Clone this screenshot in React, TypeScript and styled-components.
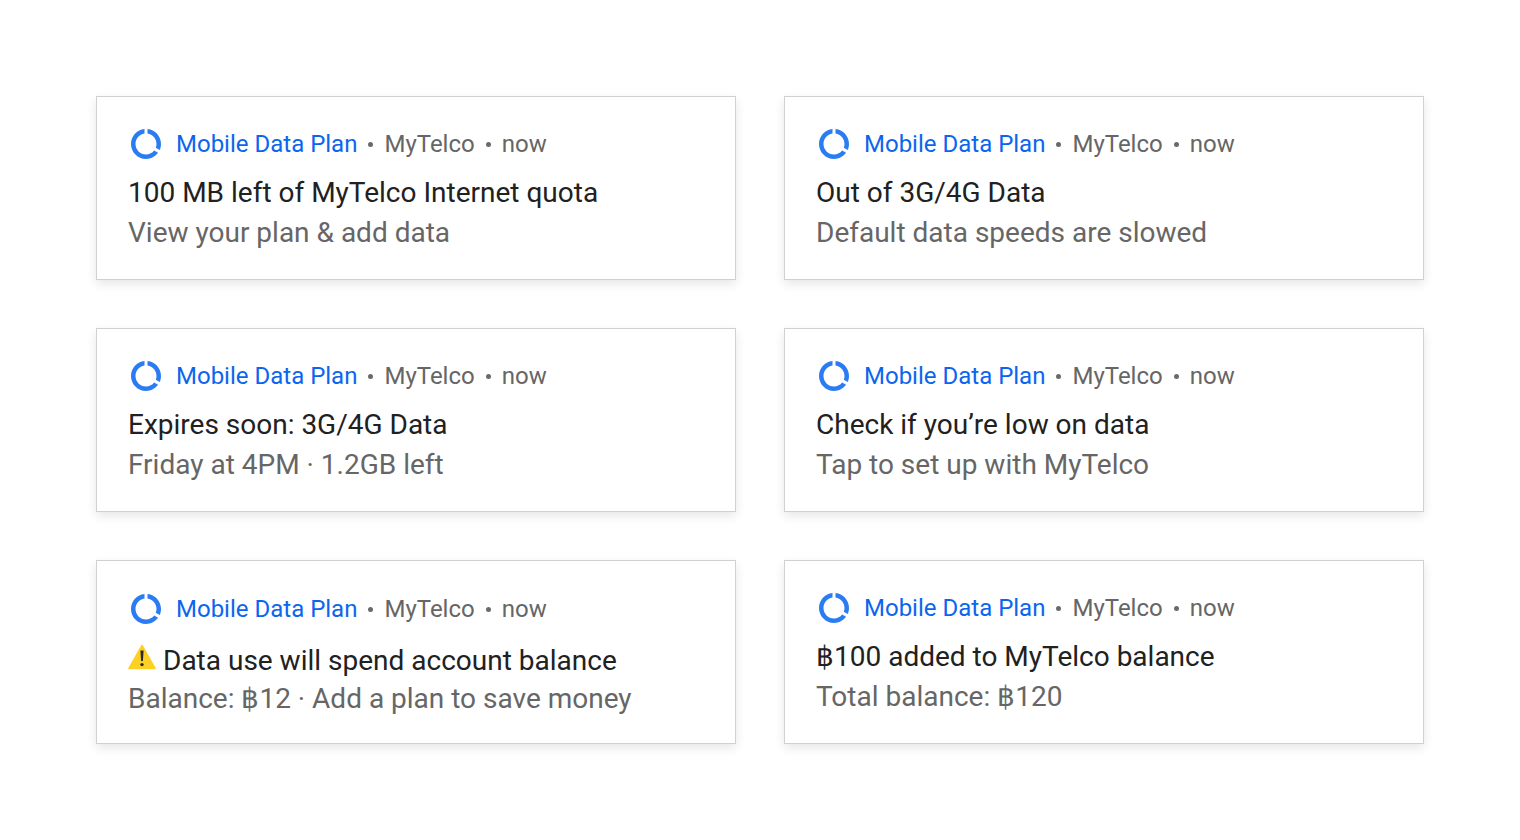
import React from "react";
import styled, { createGlobalStyle } from "styled-components";

const GlobalStyle = createGlobalStyle`
  body {
    margin: 0;
    background: #ffffff;
    font-family: Roboto, "Noto Sans", sans-serif;
  }
`;

const Page = styled.main`
  display: grid;
  grid-template-columns: 1fr 1fr;
  gap: 48px;
  padding: 96px;
`;

const Card = styled.article<{ $warning?: boolean }>`
  box-sizing: border-box;
  min-height: 184px;
  padding: ${(p) => (p.$warning ? 32 : 31)}px 31px 26px;
  background: #ffffff;
  border: 1px solid #d0d0d0;
  box-shadow: 0 4px 10px rgba(0, 0, 0, 0.1);
`;

const Header = styled.header`
  display: flex;
  align-items: center;
  gap: 12px;
  height: 32px;
  margin-bottom: 13px;
  font-size: 24px;
  line-height: 32px;
  color: #666666;
`;

const UsageIcon = styled.svg`
  flex: none;
  width: 36px;
  height: 36px;
  fill: #2b7cf3;
`;

const AppName = styled.span`
  color: #0b66ee;
`;

const Meta = styled.div`
  display: flex;
  align-items: center;
  gap: 11px;
`;

const Dot = styled.span`
  width: 5px;
  height: 5px;
  border-radius: 50%;
  background: #6a6a6a;
`;

const Title = styled.h2<{ $warning?: boolean }>`
  display: flex;
  align-items: flex-start;
  gap: 7px;
  margin: 0;
  font-size: 28px;
  font-weight: 400;
  line-height: ${(p) => (p.$warning ? 46 : 40)}px;
  color: #212121;
`;

const Detail = styled.p<{ $warning?: boolean }>`
  margin: 0;
  font-size: 28px;
  line-height: ${(p) => (p.$warning ? 30 : 40)}px;
  color: #666666;
`;

const WarningIcon = styled.svg`
  flex: none;
  width: 28px;
  height: 28px;
  margin-top: 5px;
`;

interface Notice {
  title: string;
  detail: string;
  warning?: boolean;
}

const notices: Notice[] = [
  { title: "100 MB left of MyTelco Internet quota", detail: "View your plan & add data" },
  { title: "Out of 3G/4G Data", detail: "Default data speeds are slowed" },
  { title: "Expires soon: 3G/4G Data", detail: "Friday at 4PM · 1.2GB left" },
  { title: "Check if you’re low on data", detail: "Tap to set up with MyTelco" },
  {
    title: "Data use will spend account balance",
    detail: "Balance: ฿12 · Add a plan to save money",
    warning: true,
  },
  { title: "฿100 added to MyTelco balance", detail: "Total balance: ฿120" },
];

function NoticeCard({ title, detail, warning }: Notice) {
  return (
    <Card $warning={warning}>
      <Header>
        <UsageIcon viewBox="0 0 24 24" aria-hidden="true">
          <path d="M13 2.05v3.03c3.39.49 6 3.39 6 6.92 0 .9-.18 1.75-.48 2.54l2.6 1.53c.56-1.24.88-2.62.88-4.07 0-5.18-3.95-9.45-9-9.95zM12 19c-3.87 0-7-3.13-7-7 0-3.53 2.61-6.43 6-6.92V2.05c-5.06.5-9 4.76-9 9.95 0 5.52 4.47 10 9.99 10 3.31 0 6.24-1.61 8.06-4.09l-2.6-1.53C16.17 17.98 14.21 19 12 19z" />
        </UsageIcon>
        <Meta>
          <AppName>Mobile Data Plan</AppName>
          <Dot />
          <span>MyTelco</span>
          <Dot />
          <span>now</span>
        </Meta>
      </Header>
      <Title $warning={warning}>
        {warning && (
          <WarningIcon viewBox="0 0 28 28" role="img" aria-label="Warning">
            <path
              d="M14 2.4 27 25.5H1Z"
              fill="#fdd026"
              stroke="#fdd026"
              strokeWidth="1.6"
              strokeLinejoin="round"
            />
            <path d="M12.4 7.5h3.2l-.7 10.5h-1.8z" fill="#2b2a24" />
            <circle cx="14" cy="21.6" r="1.7" fill="#2b2a24" />
          </WarningIcon>
        )}
        <span>{title}</span>
      </Title>
      <Detail $warning={warning}>{detail}</Detail>
    </Card>
  );
}

export default function App() {
  return (
    <>
      <GlobalStyle />
      <Page>
        {notices.map((notice) => (
          <NoticeCard key={notice.title} {...notice} />
        ))}
      </Page>
    </>
  );
}
